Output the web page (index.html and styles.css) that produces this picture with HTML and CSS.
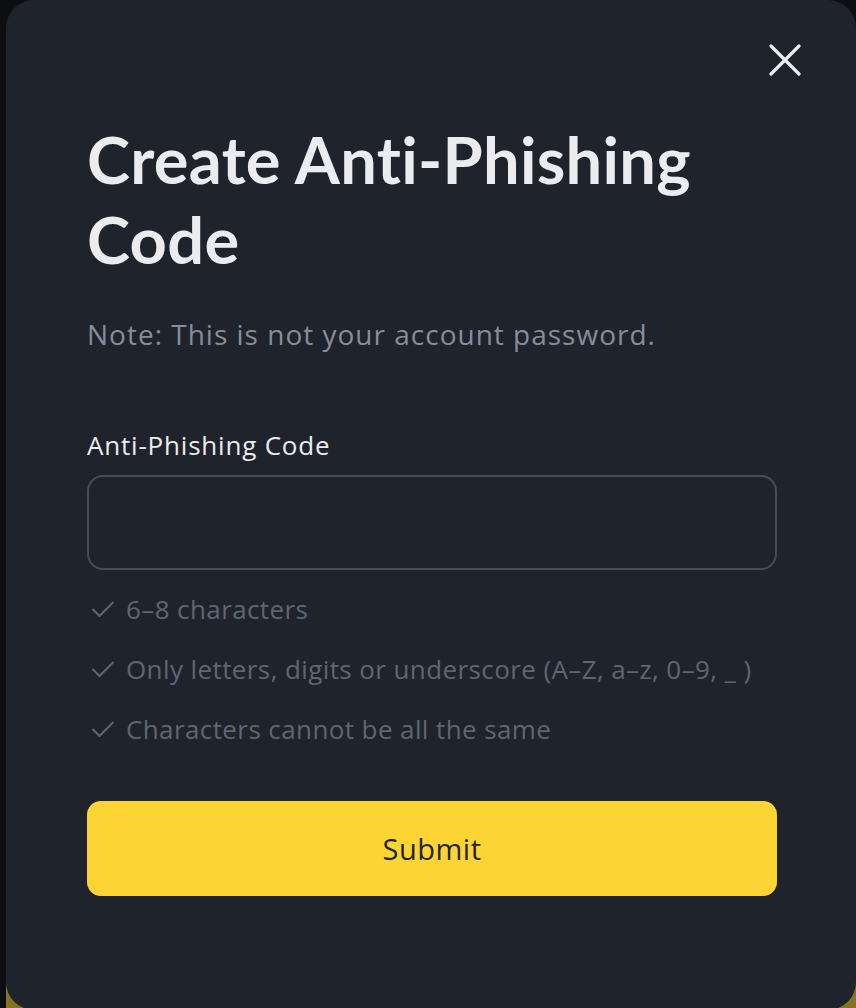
FILE: index.html
```html
<!DOCTYPE html>
<html lang="en">
<head>
<meta charset="utf-8">
<title>Create Anti-Phishing Code</title>
<link rel="stylesheet" href="styles.css">
</head>
<body>
<div class="backdrop-btn"></div>
<div class="modal">
  <div class="modal-head">
    <button class="close" aria-label="Close">
      <svg width="32" height="32" viewBox="0 0 32 32"><path d="M2 2 L30 30 M30 2 L2 30" stroke="#eaecef" stroke-width="3.2" stroke-linecap="round" fill="none"/></svg>
    </button>
  </div>
  <h1 class="title">Create Anti-Phishing Code</h1>
  <p class="note">Note: This is not your account password.</p>
  <label class="label">Anti-Phishing Code</label>
  <div class="input"></div>
  <ul class="rules">
    <li class="rule"><svg class="check" width="24" height="24" viewBox="0 0 24 24"><path d="M2 12.5 L8.5 19 L22 5.5" stroke="#5e6673" stroke-width="2" fill="none" stroke-linecap="round" stroke-linejoin="round"/></svg><span>6–8 characters</span></li>
    <li class="rule"><svg class="check" width="24" height="24" viewBox="0 0 24 24"><path d="M2 12.5 L8.5 19 L22 5.5" stroke="#5e6673" stroke-width="2" fill="none" stroke-linecap="round" stroke-linejoin="round"/></svg><span>Only letters, digits or underscore (A–Z, a–z, 0–9, _ )</span></li>
    <li class="rule"><svg class="check" width="24" height="24" viewBox="0 0 24 24"><path d="M2 12.5 L8.5 19 L22 5.5" stroke="#5e6673" stroke-width="2" fill="none" stroke-linecap="round" stroke-linejoin="round"/></svg><span>Characters cannot be all the same</span></li>
  </ul>
  <button class="submit">Submit</button>
</div>
</body>
</html>
```
FILE: styles.css
```css
html, body {
  margin: 0;
  padding: 0;
}
body {
  width: 856px;
  height: 1008px;
  overflow: hidden;
  background: #0c0e12;
  font-family: "Open Sans", "Noto Sans", "Liberation Sans", sans-serif;
  position: relative;
}
.backdrop-btn {
  position: absolute;
  left: 6px;
  right: 0;
  top: 970px;
  height: 60px;
  background: #857322;
}
.modal {
  position: relative;
  margin-left: 6px;
  width: 850px;
  height: 1010px;
  box-sizing: border-box;
  background: #1f232b;
  border-radius: 28px;
  padding: 44px 79px 0 81px;
}
.modal-head {
  display: flex;
  justify-content: flex-end;
  margin-right: -24px;
  height: 44px;
}
.close {
  background: none;
  border: 0;
  padding: 0;
  width: 32px;
  height: 32px;
  cursor: pointer;
}
.close svg { display: block; }
.title {
  margin: 31px 0 0;
  font-family: "Lato", "Open Sans", sans-serif;
  font-size: 65px;
  line-height: 80px;
  letter-spacing: 0.3px;
  font-weight: 700;
  color: #eaecef;
}
.note {
  margin: 37px 0 0;
  font-size: 28px;
  line-height: 36px;
  letter-spacing: 1px;
  color: #848e9c;
}
.label {
  display: block;
  margin-top: 77px;
  font-size: 26px;
  line-height: 32px;
  letter-spacing: 0.8px;
  font-weight: 500;
  color: #eaecef;
}
.input {
  margin-top: 14px;
  height: 95px;
  box-sizing: border-box;
  border: 2px solid #474d57;
  border-radius: 16px;
}
.rules {
  list-style: none;
  margin: 21px 0 0;
  padding: 0;
  display: flex;
  flex-direction: column;
  gap: 24px;
}
.rule {
  display: flex;
  align-items: center;
  gap: 11px;
  font-size: 26px;
  line-height: 36px;
  letter-spacing: 0.4px;
  color: #5e6673;
  padding-left: 4px;
}
.check { flex: none; }
.submit {
  display: block;
  width: 100%;
  margin-top: 54px;
  height: 95px;
  border: 0;
  border-radius: 14px;
  background: #fcd535;
  color: #202630;
  font-family: inherit;
  font-size: 29px;
  letter-spacing: 0.5px;
  font-weight: 500;
}
```
